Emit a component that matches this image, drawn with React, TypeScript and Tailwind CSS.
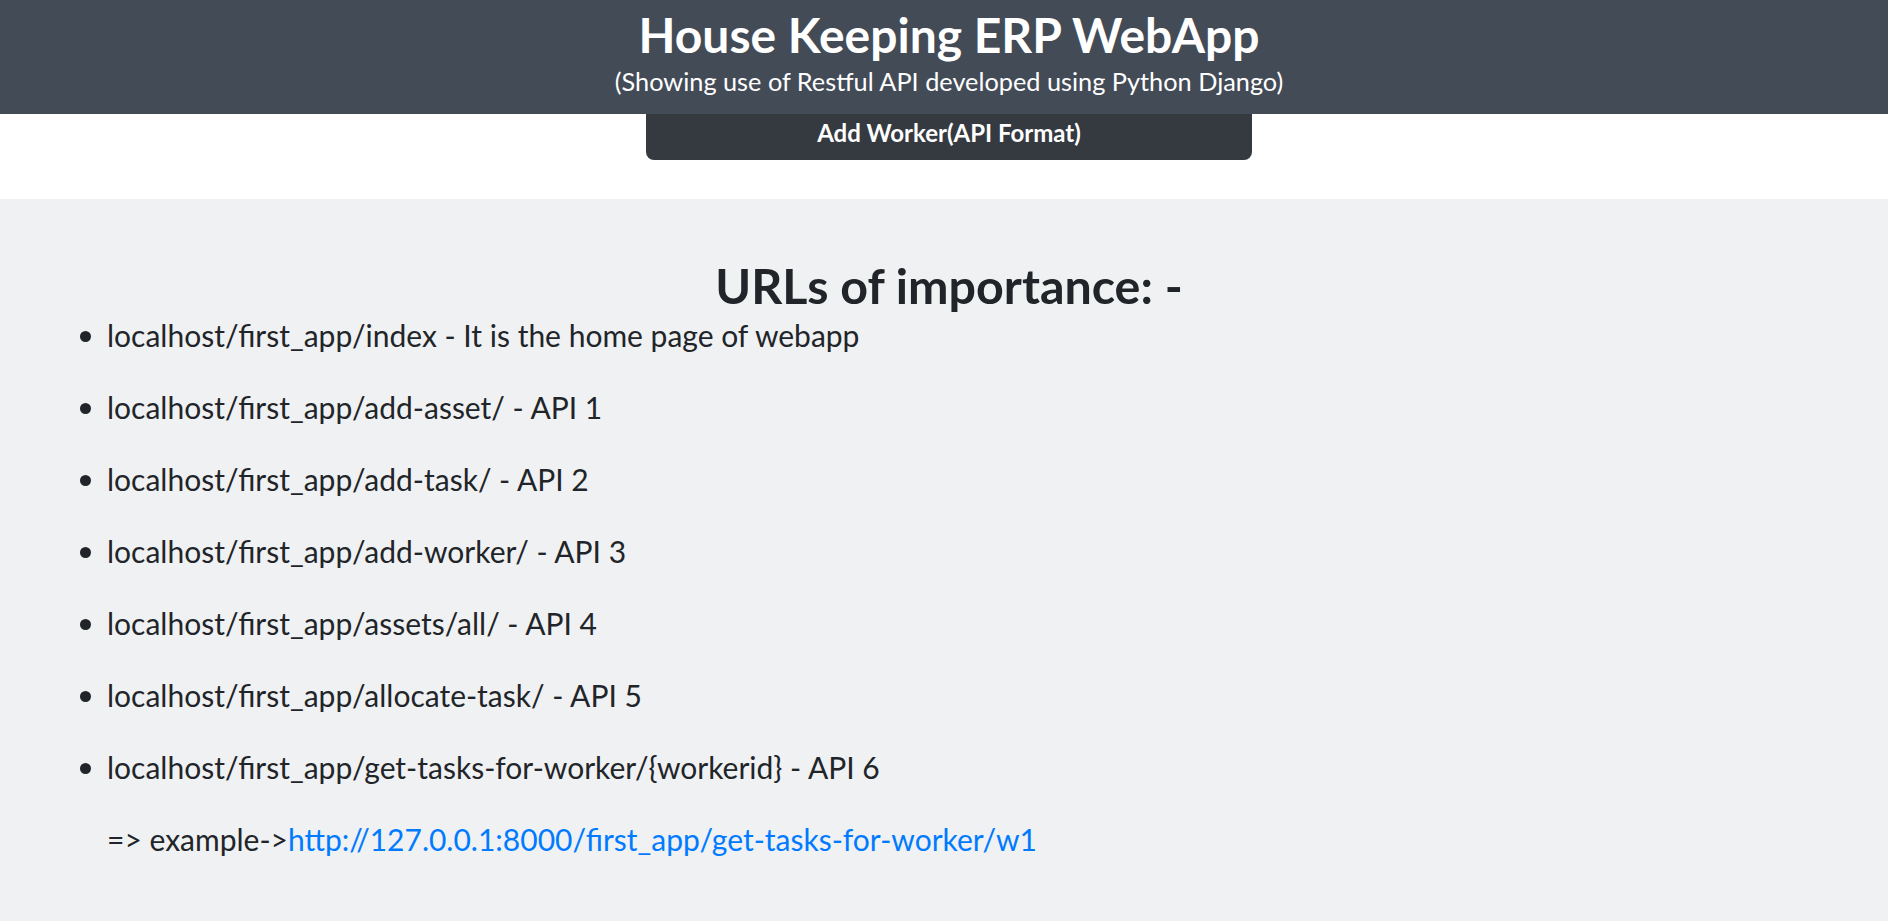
import React from 'react'

const urls = [
  'localhost/first_app/index - It is the home page of webapp',
  'localhost/first_app/add-asset/ - API 1',
  'localhost/first_app/add-task/ - API 2',
  'localhost/first_app/add-worker/ - API 3',
  'localhost/first_app/assets/all/ - API 4',
  'localhost/first_app/allocate-task/ - API 5',
  'localhost/first_app/get-tasks-for-worker/{workerid} - API 6',
]

export default function App() {
  return (
    <div className="min-h-[921px] flex flex-col bg-white text-[#212529] font-['Lato',sans-serif]">
      {/* header */}
      <div className="h-[114px] bg-[#434b57] text-white flex flex-col items-center pl-[10px]">
        <h1 className="text-[48px] font-bold leading-none mt-[11px]">House Keeping ERP WebApp</h1>
        <p className="text-[25.3px] leading-none mt-[10px]">(Showing use of Restful API developed using Python Django)</p>
      </div>

      <div className="h-[85px] flex justify-center pl-[10px]">
        <button className="w-[606px] h-[46px] bg-[#353a41] text-white text-[24px] font-bold leading-none pt-[7px] flex justify-center items-start rounded-b-[8px]">
          Add Worker(API Format)
        </button>
      </div>

      {/* urls */}
      <div className="flex-1 bg-[#f0f1f3] pt-[62px] pb-[40px]">
        <h2 className="text-[48.4px] font-bold text-center leading-none pl-[10px]">URLs of importance: -</h2>
        <ul className="pl-[80px] mt-[8px] text-[30px]">
          {urls.map((u, i) => (
            <li key={i} className="h-[72px] leading-[36px] flex items-start">
              <span className="w-[11px] h-[11px] rounded-full bg-[#212529] mt-[14px] mr-[16px] shrink-0" />
              {u}
            </li>
          ))}
        </ul>
        <p className="pl-[107px] text-[30px] leading-[36px]">
          =&gt; example-&gt;<a href="#" className="text-[#007bff]">http://127.0.0.1:8000/first_app/get-tasks-for-worker/w1</a>
        </p>
      </div>
    </div>
  )
}
